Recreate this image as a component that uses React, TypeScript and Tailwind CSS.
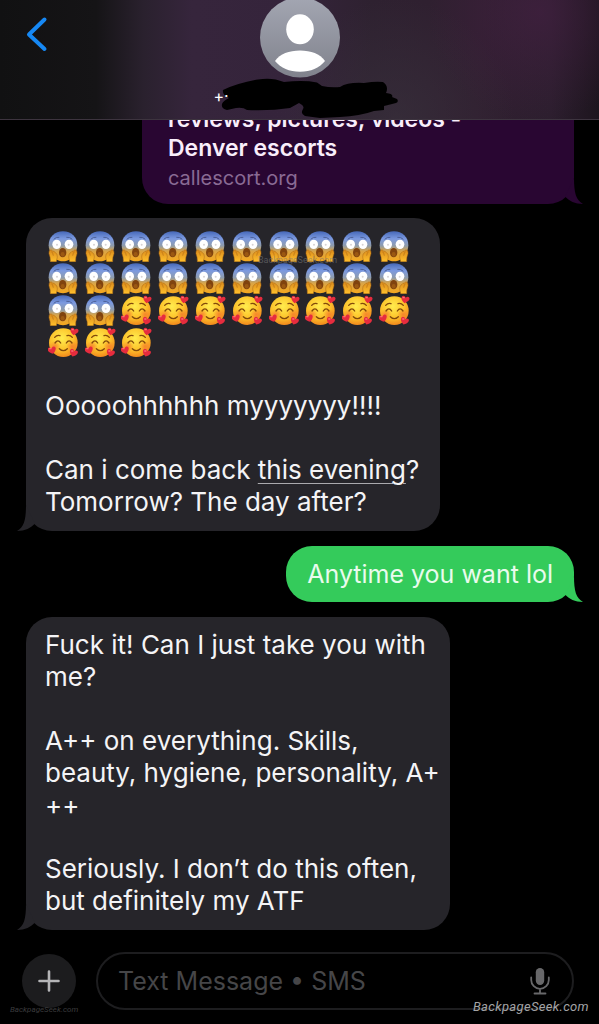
import React from "react";

function Tail({ side, color }: { side: "left" | "right"; color: string }) {
  const place =
    side === "right"
      ? "absolute -right-[9px] bottom-0 h-8 w-6"
      : "absolute -left-[9px] bottom-0 h-8 w-6 -scale-x-100";
  return (
    <svg viewBox="0 0 24 32" className={place} aria-hidden="true">
      <path d="M15 6C15 21 17 28 24 32C16 32 10 29 6 24.500Z" fill={color} />
    </svg>
  );
}

function EmojiDefs() {
  return (
    <svg className="absolute h-0 w-0" aria-hidden="true">
      <defs>
        <linearGradient id="scream" x1="0" y1="0" x2="0" y2="1">
          <stop offset="0" stopColor="#4668b8" />
          <stop offset="0.25" stopColor="#7c9ae0" />
          <stop offset="0.48" stopColor="#8f9cac" />
          <stop offset="0.66" stopColor="#d9a548" />
          <stop offset="1" stopColor="#f6a81c" />
        </linearGradient>
        <linearGradient id="hand" x1="0" y1="0" x2="0" y2="1">
          <stop offset="0" stopColor="#d98a1c" />
          <stop offset="1" stopColor="#ffc02c" />
        </linearGradient>
        <radialGradient id="love" cx="0.45" cy="0.35" r="0.65">
          <stop offset="0" stopColor="#ffec4e" />
          <stop offset="0.6" stopColor="#fdc42c" />
          <stop offset="1" stopColor="#f28a1c" />
        </radialGradient>
        <radialGradient id="blush">
          <stop offset="0" stopColor="#f4702c" stopOpacity="0.7" />
          <stop offset="1" stopColor="#f4702c" stopOpacity="0" />
        </radialGradient>
        <path
          id="heart"
          d="M0 12C-9 7 -14 1 -12 -6C-10 -11 -3 -11 0 -5C4 -11 11 -10 12 -4C13 2 6 8 0 12Z"
        />
        <symbol id="emoji-scream" viewBox="0 0 93 93">
          <path
            d="M45 1C70 1 88 18 88 43C88 61 74 91 45 91C16 91 2 61 2 43C2 18 20 1 45 1Z"
            fill="url(#scream)"
          />
          <path d="M17 25Q25 17 34 19M55 19Q65 17 73 25" stroke="#4e6299" strokeWidth="3" fill="none" />
          <ellipse cx="26" cy="40" rx="13" ry="14" fill="#fff" />
          <ellipse cx="63" cy="40" rx="13" ry="14" fill="#fff" />
          <ellipse cx="27" cy="41" rx="3" ry="3" fill="#d7d3d4" />
          <ellipse cx="62" cy="41" rx="3" ry="3" fill="#d7d3d4" />
          <ellipse cx="44" cy="65" rx="11" ry="14" fill="#80430e" />
          <ellipse cx="44" cy="70" rx="6" ry="7" fill="#9b5812" />
          <path
            d="M7 57Q10 54 14 61Q18 59 21 64Q29 67 28 78L25 92H7Q8 80 3 68Q2 60 7 57Z"
            fill="url(#hand)"
            stroke="#ad6815"
            strokeWidth="1.500"
          />
          <path
            d="M83 57Q80 54 76 61Q72 59 69 64Q61 67 62 78L65 92H83Q82 80 87 68Q88 60 83 57Z"
            fill="url(#hand)"
            stroke="#ad6815"
            strokeWidth="1.500"
          />
          <path d="M11 62Q15 67 16 74M79 62Q75 67 74 74" stroke="#b36d13" strokeWidth="2" fill="none" />
        </symbol>
        <symbol id="emoji-love" viewBox="0 2 93 93">
          <circle cx="46" cy="49" r="43" fill="url(#love)" />
          <circle cx="21" cy="60" r="17" fill="url(#blush)" />
          <circle cx="72" cy="60" r="17" fill="url(#blush)" />
          <path
            d="M20 33Q27 25 36 28M57 28Q66 25 73 33M21 50Q30 37 38 50M55 50Q63 37 72 50M34 67Q46 79 58 67"
            stroke="#824a0b"
            strokeWidth="4"
            strokeLinecap="round"
            fill="none"
          />
          <g fill="#e62c3e">
            <use href="#heart" transform="translate(79 15) rotate(12)" />
            <use href="#heart" transform="translate(12 71) rotate(-16)" />
            <use href="#heart" transform="translate(77 79) rotate(18)" />
          </g>
          <g fill="#ff7479">
            <ellipse cx="74" cy="10" rx="4" ry="2" />
            <ellipse cx="7" cy="67" rx="4" ry="2" />
            <ellipse cx="73" cy="74" rx="4" ry="2" />
          </g>
        </symbol>
      </defs>
    </svg>
  );
}

function Emoji({ kind }: { kind: "scream" | "love" }) {
  return (
    <span className="flex h-8 items-center justify-center">
      <svg
        className="h-[31px] w-[31px]"
        role="img"
        aria-label={kind === "scream" ? "screaming face" : "smiling face with hearts"}
      >
        <use href={kind === "scream" ? "#emoji-scream" : "#emoji-love"} />
      </svg>
    </span>
  );
}

const emojis: ("scream" | "love")[] = Array.from({ length: 33 }, (_, i) =>
  i < 22 ? "scream" : "love",
);

function Received({ className, children }: { className: string; children: React.ReactNode }) {
  return (
    <div
      className={
        "relative ml-[26px] max-w-[90%] self-start rounded-[26px] bg-[#26252a] pt-3 pb-[13px] pl-[19px] text-[26px] leading-8 text-[#f4f4f6] " +
        className
      }
    >
      {children}
      <Tail side="left" color="#26252a" />
    </div>
  );
}

export default function App() {
  return (
    <div className="relative flex min-h-screen flex-col overflow-hidden bg-black font-['Inter','Liberation_Sans',sans-serif]">
      <EmojiDefs />
      <header className="relative z-10 grid h-[120px] grid-cols-[1fr_200px_1fr] items-start border-b border-[#3d343f] bg-[radial-gradient(circle_at_90%_10%,#46204499_0%,#46204400_110px),radial-gradient(circle_at_66%_100%,#3a333e99_0%,#3a333e00_120px),linear-gradient(90deg,#111112_0%,#151416_16%,#2a212e_24%,#36253c_32%,#35243b_48%,#2e2130_62%,#301f30_80%,#2c1e2e_92%,#1d151e_100%)]">
        <button aria-label="Back" className="mt-4 ml-6 flex h-9 w-7 items-center justify-center">
          <svg viewBox="0 0 28 36" className="h-9 w-7" fill="none">
            <path d="M20.500 3.500L5 18.500L20.500 33" stroke="#1688f4" strokeWidth="4" strokeLinecap="round" strokeLinejoin="round" />
          </svg>
        </button>
        <div className="relative flex flex-col items-center">
          <svg viewBox="0 0 80 78" className="h-[78px] w-20" role="img" aria-label="Contact">
            <defs>
              <linearGradient id="avatar" x1="0" y1="0" x2="0" y2="1">
                <stop offset="0" stopColor="#a3a6b2" />
                <stop offset="1" stopColor="#80828c" />
              </linearGradient>
            </defs>
            <circle cx="40" cy="37.500" r="40" fill="url(#avatar)" />
            <ellipse cx="40" cy="29.300" rx="13.800" ry="15" fill="#fff" />
            <path d="M15 61C20 54 29 50.600 40 50.600S60 54 65 61C59 68 51 71.800 40 71.800S21 68 15 61Z" fill="#fff" />
          </svg>
          <svg viewBox="200 78 200 41" className="absolute top-[78px] left-0 h-[41px] w-[200px]" aria-hidden="true">
            <path
              d="M223 90Q238 83 258 79.500Q272 77 284 82Q304 80 317 82.500L322 86Q331 88 340 87Q348 82 364 83Q376 81 383 82Q389 86 386 93Q394 94 392 97L397 99Q399 102 396 103L384 106V110L374 111Q360 116 340 117L320 118L305 116Q300 114 303 109Q305 106 299 103L290 108Q270 111 247 110Q243 107 236 108L227 110Q221 109 222 104Q223 101 229 98Q222 95 223 90Z"
              fill="#000"
            />
          </svg>
          <div className="relative w-full pt-2 pl-[14px] text-base leading-5 text-white">+·</div>
        </div>
      </header>

      <main className="flex flex-1 flex-col">
        <div className="relative -mt-[15px] mr-[25px] w-[432px] max-w-[90%] self-end rounded-b-[26px] bg-[#290632] pr-4 pb-[11px] pl-[26px]">
          <a href="#" className="block">
            <span className="block text-[23px] leading-[29px] font-semibold text-[#f9eefb]">
              reviews, pictures, videos -<br />
              Denver escorts
            </span>
            <span className="block text-xl leading-[30px] text-[#896b94]">callescort.org</span>
          </a>
          <Tail side="right" color="#290632" />
        </div>

        <div className="flex flex-col gap-[15px] pt-[14px]">
          <Received className="w-[414px]">
            <div className="grid w-[368px] grid-cols-10">
              {emojis.map((kind, i) => (
                <Emoji key={i} kind={kind} />
              ))}
            </div>
            <p className="pt-8">Ooooohhhhhh myyyyyyy!!!!</p>
            <p className="pt-8">
              Can i come back{" "}
              <span className="underline decoration-[#aaaaae] decoration-1 underline-offset-4">this evening</span>?
              <br />
              Tomorrow? The day after?
            </p>
          </Received>

          <div className="relative mr-[25px] self-end rounded-[26px] bg-[#34cb5b] px-[21px] py-3 text-[25px] leading-8 text-[#e9fbed]">
            Anytime you want lol
            <Tail side="right" color="#34cb5b" />
          </div>

          <Received className="w-[424px]">
            <p>
              Fuck it! Can I just take you with
              <br />
              me?
            </p>
            <p className="pt-8">
              A++ on everything. Skills,
              <br />
              beauty, hygiene, personality, A+
              <br />
              ++
            </p>
            <p className="pt-8">
              Seriously. I don’t do this often,
              <br />
              but definitely my ATF
            </p>
          </Received>
        </div>
      </main>

      <footer className="flex items-center gap-5 pt-[22px] pr-[25px] pb-[14px] pl-[22px]">
        <button aria-label="Add attachment" className="flex size-[54px] shrink-0 items-center justify-center rounded-full bg-[#1c1c1e]">
          <svg viewBox="0 0 22 22" className="size-[22px]">
            <path d="M11 1.500V20.500M1.500 11H20.500" stroke="#b5b5b7" strokeWidth="2.600" strokeLinecap="round" />
          </svg>
        </button>
        <div className="flex h-[58px] min-w-0 flex-1 items-center rounded-full border-2 border-[#1d1d1f] pr-[22px] pl-5">
          <input
            aria-label="Text Message"
            placeholder="Text Message • SMS"
            className="min-w-0 flex-1 bg-transparent pt-[2px] text-[25px] text-white outline-none placeholder:text-[#464648]"
          />
          <button aria-label="Dictate">
            <svg viewBox="0 0 20 28" className="h-7 w-5" fill="none" stroke="#68686a" strokeWidth="1.800" strokeLinecap="round">
              <rect x="5.800" y="1" width="8.400" height="17" rx="4.200" fill="#68686a" stroke="none" />
              <path d="M1.200 10.500V13A8.800 8.800 0 0 0 18.800 13V10.500M10 22V26M4.500 26.500H15.500" />
            </svg>
          </button>
        </div>
      </footer>

      <span className="absolute right-[10px] bottom-2 font-['Roboto'] text-[13px] leading-[18px] text-[#a4a4a6] italic tracking-wide">
        BackpageSeek.com
      </span>
      <span className="absolute bottom-2 left-[10px] font-['Roboto'] text-[8px] leading-3 text-[#3b3b3d] italic">
        BackpageSeek.com
      </span>
      <span className="absolute top-[254px] left-[258px] font-['Roboto'] text-[9px] leading-3 text-[#77777a]/60">
        BackpageSeek.com
      </span>
    </div>
  );
}
